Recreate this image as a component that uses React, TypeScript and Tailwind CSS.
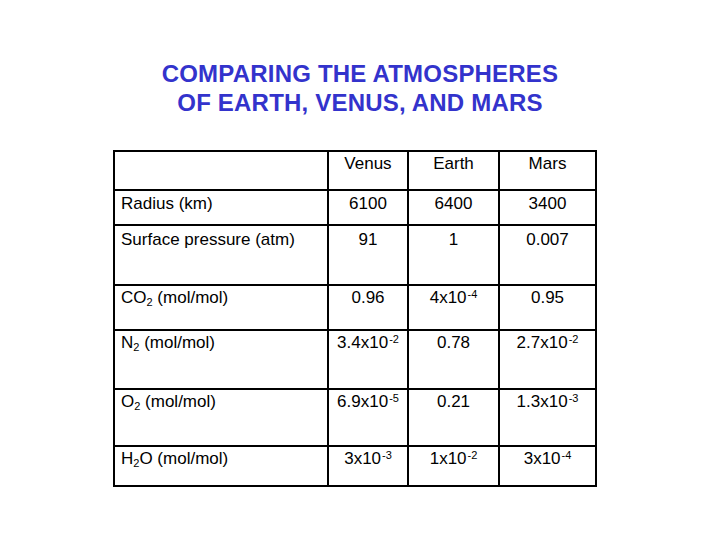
import React from 'react';

type Row = {
  label: React.ReactNode;
  values: React.ReactNode[];
  h: string;
};

const sci = (base: string, exp: string) => (
  <>
    {base}
    <sup className="ml-[1px] text-[11px]">{exp}</sup>
  </>
);

const rows: Row[] = [
  { label: 'Radius (km)', values: ['6100', '6400', '3400'], h: 'h-[33px] pt-[3px]' },
  { label: 'Surface pressure (atm)', values: ['91', '1', '0.007'], h: 'h-[58px] pt-[4px]' },
  {
    label: (
      <>
        CO<sub className="text-[11px]">2</sub> (mol/mol)
      </>
    ),
    values: ['0.96', sci('4x10', '-4'), '0.95'],
    h: 'h-[43px] pt-[2px]',
  },
  {
    label: (
      <>
        N<sub className="text-[11px]">2</sub> (mol/mol)
      </>
    ),
    values: [sci('3.4x10', '-2'), '0.78', sci('2.7x10', '-2')],
    h: 'h-[57px] pt-[2px]',
  },
  {
    label: (
      <>
        O<sub className="text-[11px]">2</sub> (mol/mol)
      </>
    ),
    values: [sci('6.9x10', '-5'), '0.21', sci('1.3x10', '-3')],
    h: 'h-[55px] pt-[2px]',
  },
  {
    label: (
      <>
        H<sub className="text-[11px]">2</sub>O (mol/mol)
      </>
    ),
    values: [sci('3x10', '-3'), sci('1x10', '-2'), sci('3x10', '-4')],
    h: 'h-[38px] pt-[2px]',
  },
];

export default function App() {
  return (
    <div className="w-[720px] h-[540px] bg-white font-['Liberation_Sans',Arial,sans-serif] text-black">
      {/* Title */}
      <h1 className="pt-[59px] text-center text-[24px] leading-[29px] font-bold tracking-[0.2px] text-[#3333cc]">
        COMPARING THE ATMOSPHERES
        <br />
        OF EARTH, VENUS, AND MARS
      </h1>

      {/* Table */}
      <div className="mt-[33px] ml-[113px] w-[484px] bg-black p-[2px] grid grid-cols-[212px_78px_89px_95px] gap-[2px] text-[17px] leading-[20px]">
        <div className="bg-white h-[37px]" />
        {['Venus', 'Earth', 'Mars'].map((p) => (
          <div key={p} className="bg-white h-[37px] pt-[2px] text-center">
            {p}
          </div>
        ))}

        {rows.map((r, i) => (
          <React.Fragment key={i}>
            <div className={`bg-white ${r.h} pl-[6px] whitespace-nowrap`}>{r.label}</div>
            {r.values.map((v, j) => (
              <div key={j} className={`bg-white ${r.h} text-center whitespace-nowrap`}>
                {v}
              </div>
            ))}
          </React.Fragment>
        ))}
      </div>
    </div>
  );
}
